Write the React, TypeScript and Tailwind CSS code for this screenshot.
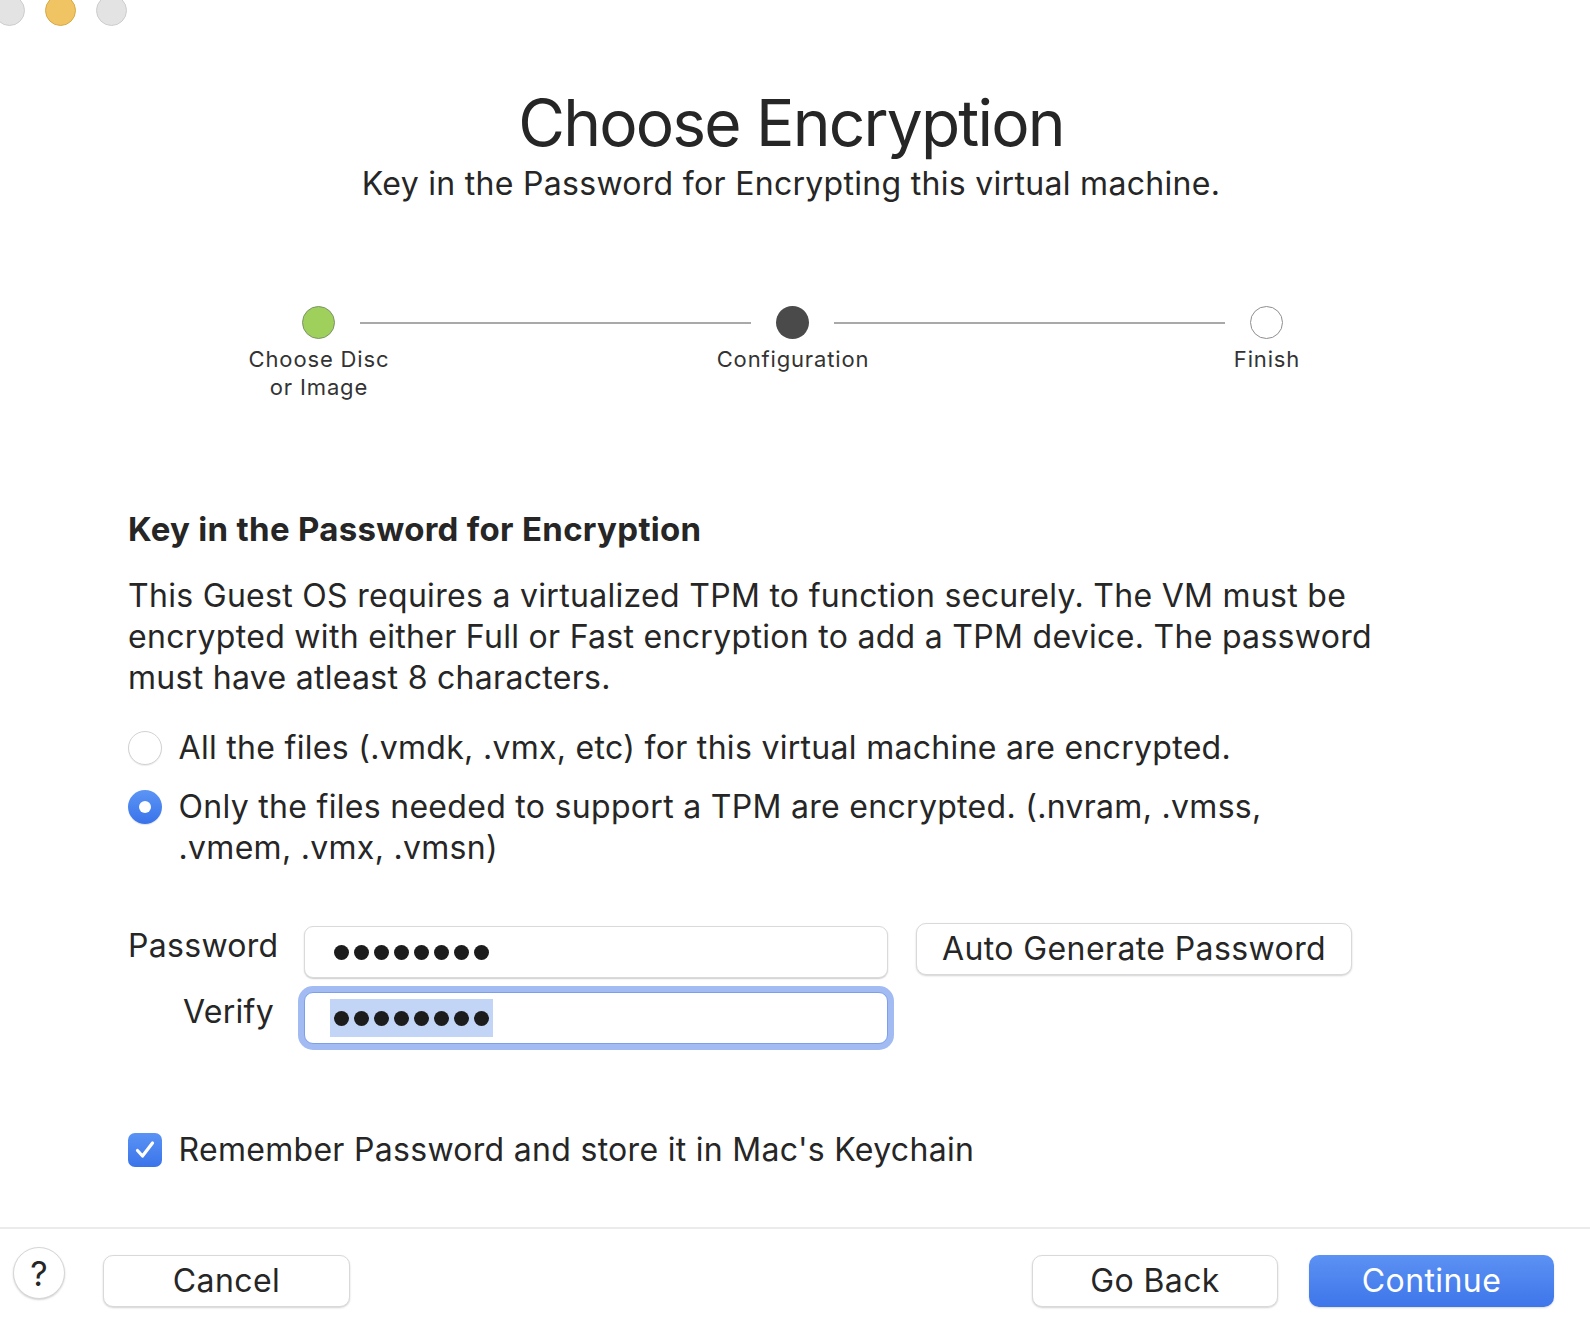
import React from "react";

function Dots() {
  return (
    <div className="flex gap-[5px]">
      {[0, 1, 2, 3, 4, 5, 6, 7].map((i) => (
        <div key={i} className="w-[15px] h-[15px] rounded-full bg-[#1c1c1c]" />
      ))}
    </div>
  );
}

function MacButton({ label, className = "" }: { label: string; className?: string }) {
  return (
    <div
      className={
        "h-[52px] rounded-[10px] bg-white border border-[#d9d9d9] shadow-[0_1px_2px_rgba(0,0,0,0.18)] flex items-center justify-center text-[32px] tracking-[0.4px] text-[#262626] " +
        className
      }
    >
      {label}
    </div>
  );
}

export default function App() {
  return (
    <div className="w-[1590px] h-[1324px] bg-white relative overflow-hidden text-[#262626] font-['Inter',sans-serif] flex flex-col">
      {/* window controls */}
      <div className="absolute top-[-5px] left-[-6px] flex gap-[20px]">
        <div className="w-[31px] h-[31px] rounded-full bg-[#e3e3e3] border border-[#cdcdcd]" />
        <div className="w-[31px] h-[31px] rounded-full bg-[#f0c462] border border-[#d9a945]" />
        <div className="w-[31px] h-[31px] rounded-full bg-[#e3e3e3] border border-[#cdcdcd]" />
      </div>

      {/* title */}
      <div className="pt-[91px] pr-[8px] flex flex-col items-center">
        <h1 className="text-[64px] leading-[64px] tracking-[-1.8px] text-[#262626]">Choose Encryption</h1>
        <p className="mt-[9px] text-[32px] leading-[40px] tracking-[0.3px]">
          Key in the Password for Encrypting this virtual machine.
        </p>
      </div>

      {/* stepper */}
      <div className="mt-[102px] flex items-center pl-[302px]">
        <div className="w-[33px] h-[33px] rounded-full bg-[#9fd05b] border border-[#7c9468]" />
        <div className="mx-[25px] w-[391px] h-[2px] bg-[#a9a9a9]" />
        <div className="w-[33px] h-[33px] rounded-full bg-[#4a4a4a]" />
        <div className="mx-[25px] w-[391px] h-[2px] bg-[#a9a9a9]" />
        <div className="w-[33px] h-[33px] rounded-full bg-white border-[1.5px] border-[#8e8e8e]" />
      </div>
      <div className="mt-[6px] flex pl-[219px] gap-[274px] text-[22px] leading-[28px] tracking-[0.85px] text-[#333333]">
        <div className="w-[200px] text-center">
          Choose Disc
          <br />
          or Image
        </div>
        <div className="w-[200px] text-center">Configuration</div>
        <div className="w-[200px] text-center">Finish</div>
      </div>

      {/* content */}
      <div className="mt-[108px] pl-[128px] flex flex-col tracking-[0.3px]">
        <h2 className="text-[33px] leading-[40px] font-bold text-[#262626]">Key in the Password for Encryption</h2>
        <p className="mt-[26px] text-[32px] leading-[41px] whitespace-nowrap">
          This Guest OS requires a virtualized TPM to function securely. The VM must be
          <br />
          encrypted with either Full or Fast encryption to add a TPM device. The password
          <br />
          must have atleast 8 characters.
        </p>

        <div className="mt-[29px] flex items-start">
          <div className="mt-[3.5px] w-[34px] h-[34px] rounded-full bg-white border border-[#d2d2d2] shadow-[0_1px_1px_rgba(0,0,0,0.08)]" />
          <div className="ml-[16.5px] text-[32px] leading-[41px] whitespace-nowrap">
            All the files (.vmdk, .vmx, etc) for this virtual machine are encrypted.
          </div>
        </div>
        <div className="mt-[18px] flex items-start">
          <div className="mt-[3.5px] w-[34px] h-[34px] rounded-full bg-gradient-to-b from-[#5b95f5] to-[#3a72ea] flex items-center justify-center shadow-[0_1px_1px_rgba(0,0,0,0.12)]">
            <div className="w-[12px] h-[12px] rounded-full bg-white" />
          </div>
          <div className="ml-[16.5px] text-[32px] leading-[41px] whitespace-nowrap">
            Only the files needed to support a TPM are encrypted. (.nvram, .vmss,
            <br />
            .vmem, .vmx, .vmsn)
          </div>
        </div>

        {/* password fields */}
        <div className="mt-[58px] flex items-start">
          <div className="w-[146px] text-right text-[32px] leading-[40px]">Password</div>
          <div className="ml-[30px] w-[584px] h-[52px] rounded-[9px] bg-white border border-[#dadada] shadow-[0_1px_1.5px_rgba(0,0,0,0.2)] flex items-center pl-[29px]">
            <Dots />
          </div>
          <MacButton label="Auto Generate Password" className="ml-[28px] -mt-[3px] w-[436px] h-[51px]" />
        </div>
        <div className="mt-[14px] flex items-start">
          <div className="w-[146px] text-right text-[32px] leading-[40px]">Verify</div>
          <div className="ml-[30px] w-[584px] h-[52px] rounded-[9px] bg-white border-[1.5px] border-[#7d9fe9] shadow-[0_0_0_6px_#a2bbf2] flex items-center pl-[25px]">
            <div className="bg-[#c2d5f6] h-[38px] px-[4px] flex items-center">
              <Dots />
            </div>
          </div>
        </div>

        {/* checkbox */}
        <div className="mt-[85px] flex items-start">
          <div className="mt-[3.5px] w-[34px] h-[34px] rounded-[7px] bg-gradient-to-b from-[#5a93f4] to-[#3b74ea] flex items-center justify-center">
            <svg width="24" height="24" viewBox="0 0 24 24" fill="none">
              <path d="M4.5 12.5 L9.5 18 L19.5 5" stroke="white" strokeWidth="3.2" strokeLinecap="round" strokeLinejoin="round" />
            </svg>
          </div>
          <div className="ml-[16.5px] text-[32px] leading-[41px] whitespace-nowrap">
            Remember Password and store it in Mac's Keychain
          </div>
        </div>
      </div>

      {/* separator */}
      <div className="mt-[57px] h-[2px] bg-[#ebebeb]" />

      {/* footer */}
      <div className="mt-[26px] flex items-start pr-[36px]">
        <div className="ml-[13px] -mt-[8px] w-[52px] h-[52px] rounded-full bg-white border border-[#d6d6d6] shadow-[0_1px_2px_rgba(0,0,0,0.18)] flex items-center justify-center text-[34px] text-[#262626]">
          ?
        </div>
        <MacButton label="Cancel" className="ml-[38px] w-[247px]" />
        <div className="flex-1" />
        <MacButton label="Go Back" className="w-[246px]" />
        <div className="ml-[31px] w-[245px] h-[52px] rounded-[10px] bg-gradient-to-b from-[#5c92f3] to-[#3e75ea] shadow-[0_1px_2px_rgba(0,0,0,0.15)] flex items-center justify-center text-[32px] tracking-[0.4px] text-white">
          Continue
        </div>
      </div>
    </div>
  );
}
